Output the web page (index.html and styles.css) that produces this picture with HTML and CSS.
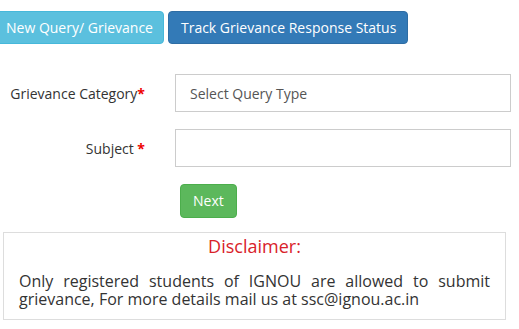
FILE: index.html
```html
<!DOCTYPE html>
<html lang="en">
<head>
<meta charset="utf-8">
<title>Grievance</title>
<link rel="stylesheet" href="styles.css">
</head>
<body>
<div class="page">
  <div class="tabs">
    <button class="btn btn-info tab-first">New Query/ Grievance</button>
    <button class="btn btn-primary">Track Grievance Response Status</button>
  </div>
  <form class="form">
    <label class="label">Grievance Category<span class="req">*</span></label>
    <div class="field"><div class="control">Select Query Type</div></div>
    <label class="label">Subject <span class="req">*</span></label>
    <div class="field"><div class="control"></div></div>
    <div></div>
    <div class="actions"><button type="button" class="btn btn-success">Next</button></div>
  </form>
  <div class="disclaimer">
    <div class="disc-title">Disclaimer:</div>
    <p class="disc-text">Only registered students of IGNOU are allowed to submit grievance, For more details mail us at ssc@ignou.ac.in</p>
  </div>
</div>
</body>
</html>
```
FILE: styles.css
```css
html, body {
  margin: 0;
  padding: 0;
  background: #fff;
}
body {
  font-family: "Open Sans", "Liberation Sans", sans-serif;
  color: #333;
  font-size: 14px;
}
.page {
  width: 519px;
  overflow: hidden;
}
.tabs {
  display: flex;
  gap: 4px;
  padding-top: 11px;
  margin-left: -7px;
}
.btn {
  font-family: "Open Sans", "Liberation Sans", sans-serif;
  font-size: 14px;
  line-height: 19px;
  padding: 6px 12px;
  border: 1px solid transparent;
  border-radius: 4px;
  color: #fff;
  cursor: pointer;
  white-space: nowrap;
}
.tab-first {
  padding-right: 10px;
}
.btn-info {
  background: #5bc0de;
  border-color: #46b8da;
}
.btn-primary {
  background: #337ab7;
  border-color: #2e6da4;
  padding-right: 11px;
}
.btn-success {
  background: #5cb85c;
  border-color: #4cae4c;
  line-height: 20px;
}
.form {
  display: grid;
  grid-template-columns: 145px 336px;
  column-gap: 30px;
  row-gap: 17px;
  margin-top: 30px;
  align-items: center;
}
.label {
  text-align: right;
  font-size: 14px;
  color: #333;
  white-space: nowrap;
  padding-top: 1px;
}
.req {
  color: #e00;
  font-weight: bold;
}
.control {
  box-sizing: border-box;
  height: 38px;
  border: 1px solid #ccc;
  background: #fff;
  padding: 0 14px;
  display: flex;
  align-items: center;
  color: #555;
  font-size: 14px;
}
.actions {
  padding-left: 5px;
}
.disclaimer {
  box-sizing: border-box;
  width: 503px;
  margin: 14px 0 0 3px;
  height: 88px;
  border: 1px solid #ddd;
  padding: 1px 15px 0 15px;
}
.disc-title {
  text-align: center;
  color: #d9222a;
  font-size: 18px;
  line-height: 24.5px;
}
.disc-text {
  margin: 13px 0 0 0;
  font-size: 16px;
  line-height: 18.4px;
  text-align: justify;
  color: #333;
}
```
